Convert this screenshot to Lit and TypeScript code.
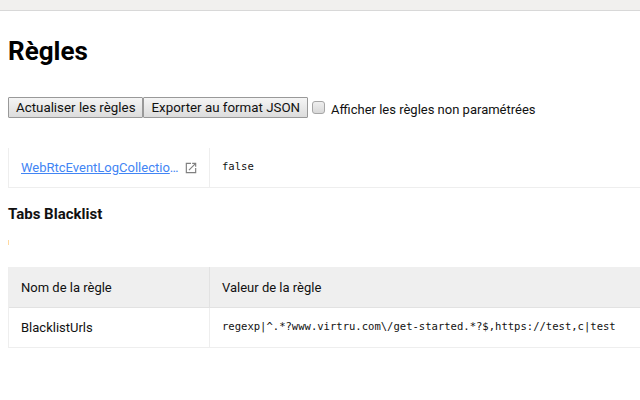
import { LitElement, html, css } from "lit";
import { customElement } from "lit/decorators.js";

@customElement("app-root")
export class AppRoot extends LitElement {
  static styles = css`
    :host { display: block; font-family: Roboto, sans-serif; font-size: 13px; color: #111; background: #fff; height: 400px; overflow: hidden; }
    .top { height: 10px; background: #f1f0ee; border-bottom: 1px solid #d8d8d8; }
    main { padding: 0 0 0 8px; }
    h1 { margin: 0; padding-top: 25px; height: 61px; box-sizing: border-box; font-size: 26px; line-height: 31px; font-weight: 700; color: #000; }
    .actions { display: flex; align-items: center; margin-top: 24px; height: 23px; }
    button { height: 21px; padding: 0 7px; margin: 0; font: 13.33px Roboto, sans-serif; color: #111; background: linear-gradient(#f5f5f5, #dcdcdc); border: 1px solid #999; border-radius: 1px; white-space: nowrap; }
    .refresh { padding-right: 6px; }
    .export { padding-left: 8px; }
    .box { appearance: none; width: 13px; height: 13px; margin: 0 6px 0 4px; border: 1px solid #a6a6a6; border-radius: 3px; background: linear-gradient(#efefef, #d8d8d8); }
    .label { padding-top: 4px; }
    .grid { display: grid; grid-template-columns: 201px 1fr; width: 632px; border-left: 1px solid #eeeeee; }
    .first { margin-top: 29px; }
    .cell { height: 40px; box-sizing: border-box; padding: 0 12px; display: flex; align-items: center; border-bottom: 1px solid #eeeeee; white-space: nowrap; }
    .name { border-right: 1px solid #eeeeee; gap: 5px; }
    .link { padding-right: 0; }
    .head { height: 41px; background: #efefef; border-bottom-color: #e2e2e2; }
    .head.name { border-right-color: #e2e2e2; }
    a { flex: none; color: #4285f4; text-decoration: underline; display: block; width: 158px; overflow: hidden; text-overflow: ellipsis; }
    code { font: 10.55px "DejaVu Sans Mono", monospace; color: #111; margin-bottom: 3px; }
    h2 { margin: 0; padding-top: 18px; height: 18px; box-sizing: content-box; font-size: 15px; line-height: 17px; font-weight: 700; color: #111; }
    .mark { height: 36px; display: flex; align-items: center; }
    .mark span { width: 1px; height: 5px; background: #ffd9a0; }
    .second { margin-top: 7px; }
    svg { flex: none; display: block; }
  `;

  render() {
    return html`
      <div class="top"></div>
      <main>
        <h1>Règles</h1>
        <div class="actions">
          <button class="refresh">Actualiser les règles</button><button class="export">Exporter au format JSON</button>
          <input class="box" type="checkbox" /><span class="label">Afficher les règles non paramétrées</span>
        </div>
        <div class="grid first">
          <div class="cell name link">
            <a href="#">WebRtcEventLogCollectionAllowed</a>
            <svg width="14" height="14" viewBox="0 0 24 24"><path fill="#808080" d="M19 19H5V5h7V3H3v18h18v-9h-2v7zM14 3v2h3.59l-9.83 9.83 1.41 1.41L19 6.41V10h2V3h-7z"/></svg>
          </div>
          <div class="cell"><code>false</code></div>
        </div>
        <h2>Tabs Blacklist</h2>
        <div class="mark"><span></span></div>
        <div class="grid second">
          <div class="cell name head">Nom de la règle</div>
          <div class="cell head">Valeur de la règle</div>
          <div class="cell name">BlacklistUrls</div>
          <div class="cell"><code>regexp|^.*?www.virtru.com\\/get-started.*?$,https://test,c|test</code></div>
        </div>
      </main>
    `;
  }
}
